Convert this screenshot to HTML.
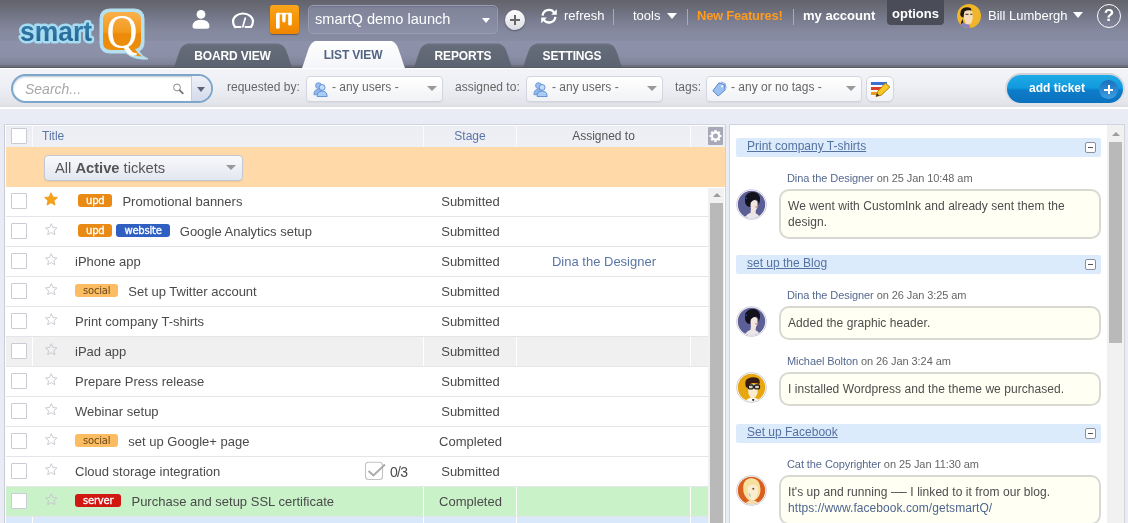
<!DOCTYPE html>
<html lang="en">
<head>
<meta charset="utf-8">
<title>smartQ</title>
<style>
*{box-sizing:border-box;margin:0;padding:0}
html,body{width:1128px;height:523px;overflow:hidden}
body{font-family:"Liberation Sans",sans-serif;font-size:13px;color:#444;background:#e9ecf4;position:relative}
.abs{position:absolute}
#hdr,#fbar,#list,#right,.sel,.lbl{will-change:transform}
/* header */
#hdr{position:absolute;left:0;top:0;width:1128px;height:68px;background:linear-gradient(#62636c 0,#6c6e7b 10px,#797c8f 20px,#84889e 30px,#898da4 41px,#8d92aa 41px,#8b90a8 55px,#83879d 62px,#7b7e91 65px,#6e7080 65.500px,#6c6e7d 67px,#555b62 67px,#555b62 68px)}
#hdr .t{position:absolute;color:#fff;font-size:13px;line-height:16px;white-space:nowrap}
.sep{position:absolute;top:8.500px;width:1px;height:16px;background:#a9abb8}
.tab{position:absolute;top:42px;height:25px;color:#fff;font-weight:bold;font-size:12px;line-height:29px;text-align:center;letter-spacing:-0.150px}
.tab svg{position:absolute;left:0;top:0}
.tab span{position:relative}
/* filter bar */
#fbar{position:absolute;left:0;top:68px;width:1128px;height:41px;background:linear-gradient(#fff 0,#fff 1px,#f3f4f8 1px,#eeeff4 19px,#e4e5eb 35px,#dcdde3 39px,#fff 39px,#fff 40.500px,#eef0f6 41px)}
.lbl{position:absolute;top:79px;font-size:12px;color:#666;line-height:16px;white-space:nowrap}
.sel{position:absolute;top:75.500px;height:25.500px;margin-left:-0.500px;border:1px solid #d3d6de;border-radius:4px;background:linear-gradient(#fff,#f1f2f6);font-size:12px;color:#666;line-height:21px;white-space:nowrap;box-shadow:0 1px 1px rgba(0,0,0,.06)}
.sel .arr{position:absolute;right:5.500px;top:9px;width:0;height:0;border-left:5px solid transparent;border-right:5px solid transparent;border-top:5px solid #999}
/* list */
#list{position:absolute;left:5px;top:124px;width:721px;height:399px;background:#fff;border-left:1px solid #fff;border-top:1px solid #d0d4de;border-right:1px solid #cfd2dc;overflow:hidden;box-shadow:-1px 0 0 #c9ccd6}
#lhead{position:absolute;left:0;top:0;width:719px;height:22px;background:linear-gradient(#fff 0,#fff 1px,#eceef3 1px,#eff0f5 22px);font-size:12px}
#lhead div{position:absolute;top:0;height:22px;line-height:23px}
#lhead .hs{position:absolute;top:0;width:1px;height:22px;background:#fbfbfd}
#grp{position:absolute;left:0;top:22px;width:719px;height:40px;background:#ffd9a8}
.row{position:absolute;left:0;width:702px;height:30px;border-bottom:1px solid #e4e5e9;font-size:13px;line-height:29px;color:#4a4a4a;white-space:nowrap;background:#fff}
.row.hov{background:#f0f0f1}
.row.grn{background:#c9f2c9}
.row .vs{position:absolute;top:0;width:1px;height:29px;background:#fff}
.row .cb{position:absolute;left:5px;top:6px;width:16px;height:16px;border:1px solid #c9ccd3;background:#fff;border-radius:1px}
.row .star{position:absolute;left:38px;top:5px}
.row .ti{position:absolute;left:69px;top:0}
.row .ti .tag.upd:first-child{margin-left:3px}
.row .st{position:absolute;left:418px;width:93px;text-align:center;top:0}
.row .as{position:absolute;left:511px;width:174px;text-align:center;top:0;color:#5a76a6}
.tag{display:inline-block;vertical-align:middle;height:13.500px;line-height:13.500px;font-size:11px;padding:0 8px;border-radius:3px;color:#fff;margin-right:4px;position:relative;top:-1.600px;-webkit-text-stroke-width:.300px;font-family:"DejaVu Sans","Liberation Sans",sans-serif;font-size:10px;letter-spacing:-0.2px}
.tag.upd{background:#e98a14}
.tag.web{background:#2f5fc0}
.tag.soc{background:#fbbc62;color:#6b4a1a;-webkit-text-stroke-width:0}
.tag.srv{background:#d01712}
/* right */
#right{position:absolute;left:729px;top:124px;width:396px;height:399px;background:#fff;border-left:1px solid #d0d4de;border-top:1px solid #d0d4de;border-right:1px solid #d0d4de;overflow:hidden}
.th{position:absolute;left:6px;width:365px;height:19px;background:#dcebfb;font-size:12px;line-height:15px;color:#5a76a6;border-radius:2px}
.th a{position:absolute;left:11px;top:1px;color:#5672a2;text-decoration:underline}
.th i{position:absolute;right:5px;top:4px;width:11px;height:11px;border:1px solid #8a8f9b;border-radius:2px;background:#fff}
.th i:after{content:"";position:absolute;left:2px;top:4px;width:5px;height:1px;background:#555}
.who{position:absolute;left:57px;font-size:11px;color:#666;line-height:13px;white-space:nowrap;letter-spacing:-0.080px}
.who b{font-weight:normal;color:#55698f}
.bub{position:absolute;left:49px;width:322px;border:2px solid #d8d9d0;border-radius:10px;background:#fffff3;font-size:12px;line-height:16px;color:#4d4d4d;padding:7px 7px 7px 7px;white-space:nowrap;letter-spacing:.060px}
.bub span{color:#4f6690}
.av{position:absolute;left:6px;width:31px;height:31px}
</style>
</head>
<body>
<div id="hdr">
<!-- logo -->
<svg class="abs" style="left:10px;top:0" width="150" height="67" viewBox="0 0 150 67">
 <defs>
  <linearGradient id="gq" x1="0" y1="0" x2="0" y2="1"><stop offset="0" stop-color="#f9b04a"/><stop offset="0.45" stop-color="#f29a1e"/><stop offset="0.5" stop-color="#ec8a08"/><stop offset="1" stop-color="#ef9010"/></linearGradient>
  <linearGradient id="gs" x1="0" y1="0" x2="0" y2="1"><stop offset="0" stop-color="#3b84b4"/><stop offset="1" stop-color="#1f5f8c"/></linearGradient>
 </defs>
 <text x="10" y="41" font-family="Liberation Sans,sans-serif" font-weight="bold" font-size="27" textLength="72" lengthAdjust="spacingAndGlyphs" stroke="#a6dcf1" stroke-width="5" stroke-linejoin="round" fill="#a6dcf1">smart</text>
 <text x="10" y="41" font-family="Liberation Sans,sans-serif" font-weight="bold" font-size="27" textLength="72" lengthAdjust="spacingAndGlyphs" fill="url(#gs)">smart</text>
 <path d="M100 9 H124 Q134 9 134 19 V42 Q134 49 129 51 Q131 56 138 59 Q124 60 116 53 H100 Q90 53 90 43 V19 Q90 9 100 9Z" fill="#b5e0ef" stroke="#b5e0ef" stroke-width="1"/>
 <path d="M101 12 H123 Q131 12 131 20 V41 Q131 48 125 49 Q127 53 132 56.500 Q123 56 118 50 H101 Q93 50 93 42 V20 Q93 12 101 12Z" fill="url(#gq)"/>
 <text x="96.500" y="48" font-family="Liberation Serif,serif" font-size="49" fill="#fff" textLength="31" lengthAdjust="spacingAndGlyphs">Q</text>
</svg>
<!-- icons -->
<svg class="abs" style="left:189px;top:8px" width="24" height="22" viewBox="0 0 24 22"><circle cx="12" cy="6.400" r="4.400" fill="#fff"/><path d="M3.600 18.500 Q3.600 11.700 12 11.700 Q20.400 11.700 20.400 18.500 Q20.400 20.700 17.500 20.700 H6.500 Q3.600 20.700 3.600 18.500Z" fill="#fff"/></svg>
<svg class="abs" style="left:230px;top:10px" width="26" height="20" viewBox="0 0 26 20"><path d="M5 17 A10 10 0 0 1 3 11.500 A10 8 0 0 1 23 11.500 A10 10 0 0 1 21 17 H15.500 M5 17 H10.500" fill="none" stroke="#fff" stroke-width="2.200" stroke-linejoin="round" stroke-linecap="round"/><path d="M12.800 16.800 L15.300 8" stroke="#fff" stroke-width="1.700" stroke-linecap="round"/></svg>
<div class="abs" style="left:270px;top:5px;width:29px;height:29px;border-radius:3px;background:linear-gradient(#fba51c,#f59200 60%,#ee8500);box-shadow:0 1px 1px rgba(0,0,0,.35)">
 <svg width="29" height="29" viewBox="0 0 29 29"><rect x="6" y="7.800" width="3.700" height="16" rx="1.600" fill="#fff"/><rect x="12.200" y="7.800" width="3.400" height="9.600" rx="1.600" fill="#fff"/><rect x="18.200" y="7.800" width="3.700" height="12.800" rx="1.600" fill="#fff"/><rect x="7" y="7.800" width="14" height="1.700" fill="#fff" opacity=".85"/></svg>
</div>
<div class="abs" style="left:308px;top:5px;width:190px;height:29px;border:1px solid #999db0;border-radius:5px;background:linear-gradient(#7f8398,#8c90a8);box-shadow:inset 0 1px 1px rgba(60,60,80,.25)"></div>
<div class="t" style="left:315px;top:10px;font-size:14.600px;line-height:18px">smartQ demo launch</div>
<i class="abs" style="left:482px;top:18px;border-left:4.500px solid transparent;border-right:4.500px solid transparent;border-top:5px solid #fff"></i>
<div class="abs" style="left:505px;top:10px;width:20px;height:20px;border-radius:50%;background:linear-gradient(#fff,#dcdde3);box-shadow:0 1px 2px rgba(0,0,0,.4)"><i class="abs" style="left:5px;top:9.200px;width:10px;height:1.600px;background:#666"></i><i class="abs" style="left:9.200px;top:5px;width:1.600px;height:10px;background:#666"></i></div>
<svg class="abs" style="left:539px;top:6px" width="20" height="20" viewBox="0 0 20 20"><path d="M3.600 9.600 A6.400 6.400 0 0 1 15.300 6.800" fill="none" stroke="#fff" stroke-width="2.300"/><path d="M16.400 10.800 A6.400 6.400 0 0 1 4.700 13.600" fill="none" stroke="#fff" stroke-width="2.300"/><path d="M12.200 8.800 L17.800 8.800 L17.800 3.200 Z" fill="#fff"/><path d="M7.800 11.600 L2.200 11.600 L2.200 17.200 Z" fill="#fff"/></svg>
<div class="t" style="left:564px;top:8px">refresh</div>
<i class="sep" style="left:613px"></i>
<div class="t" style="left:633px;top:8px">tools</div>
<i class="abs" style="left:667px;top:13px;border-left:5.500px solid transparent;border-right:5.500px solid transparent;border-top:6px solid #fff"></i>
<i class="sep" style="left:687px"></i>
<div class="t" style="left:697px;top:8px;font-weight:bold;color:#ff9b1e;letter-spacing:-0.250px">New Features!</div>
<i class="sep" style="left:793px"></i>
<div class="t" style="left:803px;top:8px;font-weight:bold">my account</div>
<div class="abs" style="left:887px;top:0;width:57px;height:25px;background:#4a4c58;border-radius:0 0 4px 4px"></div>
<div class="t" style="left:892px;top:6px;font-weight:bold">options</div>
<!-- avatar bill -->
<svg class="abs" style="left:957px;top:3.500px" width="24" height="24" viewBox="0 0 24 24"><defs><clipPath id="cb"><circle cx="12" cy="12" r="12"/></clipPath></defs><g clip-path="url(#cb)"><rect width="24" height="24" fill="#f0b62a"/><path d="M6 8 Q7 5.500 11 5.500 Q15 5.500 15.500 9 L15.800 14 Q15.500 18 13 20.500 L9 20 Q6.500 15 6 8Z" fill="#f6dcb8"/><path d="M3.200 10.500 Q3 3.500 10 3.300 Q14.500 3.300 14.500 6.500 Q10 5.800 7.500 7.500 Q6.800 10 6.500 13.500 Q4 13.500 3.200 10.500Z" fill="#1d1512"/><path d="M5.500 15 Q4 18 3.500 21 L6.500 19Z" fill="#2a1d16"/><path d="M2 24 Q3 19.500 6.500 18.800 Q9 21 12.500 20.500 L13 24Z" fill="#8b82c4"/><path d="M8.500 10.300 h3 M13.300 10.300 h2" stroke="#5a4a32" stroke-width="1.200"/></g></svg>
<div class="t" style="left:988px;top:8px">Bill Lumbergh</div>
<i class="abs" style="left:1073px;top:12px;border-left:5.500px solid transparent;border-right:5.500px solid transparent;border-top:6px solid #fff"></i>
<div class="abs" style="left:1097px;top:3.500px;width:24px;height:24px;border-radius:50%;border:1.700px solid #fff;color:#fff;font-weight:bold;font-size:17px;line-height:21px;text-align:center">?</div>
<!-- tabs -->
<svg class="abs" width="0" height="0"><defs><linearGradient id="gtd" x1="0" y1="0" x2="0" y2="1"><stop offset="0" stop-color="#6a7280"/><stop offset="0.15" stop-color="#646c7a"/><stop offset="1" stop-color="#5c6370"/></linearGradient><linearGradient id="gt" x1="0" y1="0" x2="0" y2="1"><stop offset="0" stop-color="#ffffff"/><stop offset="1" stop-color="#f4f5f9"/></linearGradient></defs></svg>
<div class="tab" style="left:173.5px;width:118px"><svg width="118" height="25" viewBox="0 0 118 25"><path d="M0 25 C2 20 3 16 4.5 12 C6.5 6 8 3.0 13.5 1.5 H104.5 C110 3.0 111.5 6 113.5 12 C115 16 116 20 118 25 Z" fill="url(#gtd)"/></svg><span>BOARD VIEW</span></div>
<div class="tab" style="left:414px;width:98px"><svg width="98" height="25" viewBox="0 0 98 25"><path d="M0 25 C2 20 3 16 4.5 12 C6.5 6 8 3.0 13.5 1.5 H84.5 C90 3.0 91.5 6 93.5 12 C95 16 96 20 98 25 Z" fill="url(#gtd)"/></svg><span>REPORTS</span></div>
<div class="tab" style="left:522.5px;width:99px"><svg width="99" height="25" viewBox="0 0 99 25"><path d="M0 25 C2 20 3 16 4.5 12 C6.5 6 8 3.0 13.5 1.5 H85.5 C91 3.0 92.5 6 94.5 12 C96 16 97 20 99 25 Z" fill="url(#gtd)"/></svg><span>SETTINGS</span></div>
<div class="tab" style="left:301.500px;width:103px;top:40px;height:28px;color:#536482;line-height:30px"><svg width="103" height="28" viewBox="0 0 103 28"><path d="M0 28 C2 23 3 19 4.5 15 C6.5 9 8 2.5 13.5 1 H89.5 C95 2.5 96.5 9 98.5 15 C100 19 101 23 103 28 Z" fill="url(#gt)"/></svg><span>LIST VIEW</span></div>
</div>
<div id="fbar"></div>
<div class="abs" style="left:11px;top:74px;width:202px;height:29px;border:2px solid #7da6cb;border-radius:15px;background:#fff;overflow:hidden;box-shadow:inset 0 1px 2px rgba(60,90,130,.35)">
 <div class="abs" style="left:12px;top:5px;font-size:14px;line-height:17px;font-style:italic;color:#a8a8a8">Search...</div>
 <svg class="abs" style="left:158px;top:5px" width="16" height="16" viewBox="0 0 16 16"><circle cx="6" cy="6.500" r="3.400" fill="#fff" stroke="#8a8a8a" stroke-width="1"/><path d="M8.800 9.300 L11.800 12.300" stroke="#777" stroke-width="1.800" stroke-linecap="round"/></svg>
 <div class="abs" style="left:178px;top:0;width:22px;height:25px;background:linear-gradient(#eef1f8,#d3daea);border-left:1px solid #c5cddd"></div>
 <i class="abs" style="left:183.500px;top:11px;border-left:4.500px solid transparent;border-right:4.500px solid transparent;border-top:5px solid #59657f"></i>
</div>
<div class="lbl" style="left:227px">requested by:</div>
<div class="sel" style="left:306px;width:137px"><svg class="abs" style="left:5.500px;top:4px" width="15.500" height="16.500" viewBox="0 0 17 18"><circle cx="6" cy="5" r="3.200" fill="#9cc0ee" stroke="#6a96d8" stroke-width="1"/><path d="M1 15 Q1 9 6 9 Q11 9 11 15Z" fill="#8fb7ea" stroke="#6a96d8" stroke-width="1"/><circle cx="10" cy="7" r="3.200" fill="#c4ddf8" stroke="#5b8ad2" stroke-width="1"/><path d="M4.500 17 Q4.500 11 10 11 Q15.500 11 15.500 17Z" fill="#a9ccf5" stroke="#5b8ad2" stroke-width="1"/></svg><span class="abs" style="left:25px;top:0">- any users -</span><i class="arr"></i></div>
<div class="lbl" style="left:455px">assigned to:</div>
<div class="sel" style="left:526px;width:137px"><svg class="abs" style="left:5.500px;top:4px" width="15.500" height="16.500" viewBox="0 0 17 18"><circle cx="6" cy="5" r="3.200" fill="#9cc0ee" stroke="#6a96d8" stroke-width="1"/><path d="M1 15 Q1 9 6 9 Q11 9 11 15Z" fill="#8fb7ea" stroke="#6a96d8" stroke-width="1"/><circle cx="10" cy="7" r="3.200" fill="#c4ddf8" stroke="#5b8ad2" stroke-width="1"/><path d="M4.500 17 Q4.500 11 10 11 Q15.500 11 15.500 17Z" fill="#a9ccf5" stroke="#5b8ad2" stroke-width="1"/></svg><span class="abs" style="left:25px;top:0">- any users -</span><i class="arr"></i></div>
<div class="lbl" style="left:675px">tags:</div>
<div class="sel" style="left:706px;width:156px"><svg class="abs" style="left:5px;top:4px" width="15" height="16" viewBox="0 0 17 18"><path d="M8 2 L14 4 L15 10 L7 17 L1 11 Z" fill="#9cc0f0" stroke="#4a7bc8" stroke-width="1" stroke-linejoin="round"/><path d="M10 1 L15 3 L16 8" fill="none" stroke="#6f9be0" stroke-width="1"/><circle cx="11.500" cy="6" r="1.200" fill="#fff"/></svg><span class="abs" style="left:24px;top:0">- any or no tags -</span><i class="arr"></i></div>
<div class="sel" style="left:866px;width:28px;border-radius:6px"><svg class="abs" style="left:3px;top:3px" width="21" height="18" viewBox="0 0 21 18"><rect x="1" y="2" width="16" height="3" fill="#3b6fd0"/><rect x="1" y="7" width="11" height="3" fill="#d8402c"/><rect x="1" y="12" width="8" height="3" fill="#f09a1c"/><path d="M6 16.500 L7.500 11.500 L15.500 3 L19.800 7 L11.500 15 Z" fill="#f8c824" stroke="#b57d00" stroke-width="1" stroke-linejoin="round"/><path d="M6 16.500 L7 13.200 L9.500 15.600Z" fill="#333"/></svg></div>
<div class="abs" style="left:1005px;top:72.500px;width:120px;height:32.500px;border-radius:17px;background:linear-gradient(#cfd1d8,#e2e4ea)"></div>
<div class="abs" style="left:1007px;top:74.500px;width:116px;height:28.500px;border-radius:15px;background:linear-gradient(#1eaae6 0,#119ade 45%,#0d7cc8 55%,#0c72c0 100%);color:#fff;font-weight:bold;font-size:12px;line-height:27px"><span class="abs" style="left:22px;top:0">add ticket</span>
 <div class="abs" style="left:92px;top:5px;width:19px;height:19px;border-radius:50%;background:linear-gradient(#1a6fbe,#3f9fe0)"><i class="abs" style="left:5px;top:9px;width:9px;height:2px;background:#fff"></i><i class="abs" style="left:8.500px;top:5px;width:2px;height:9px;background:#fff"></i></div>
</div>
<div id="list">
<div id="lhead">
 <i class="abs" style="left:5px;top:3px;width:16px;height:16px;border:1px solid #c6cad3;background:#fff;border-radius:1px"></i>
 <i class="hs" style="left:26px"></i><i class="hs" style="left:417px"></i><i class="hs" style="left:510px"></i><i class="hs" style="left:684px"></i>
 <div style="left:36px;color:#5a76a6">Title</div>
 <div style="left:418px;width:92px;text-align:center;color:#5a76a6">Stage</div>
 <div style="left:511px;width:173px;text-align:center;color:#555">Assigned to</div>
 <div style="left:702px;top:2px;width:15px;height:18px;background:#a7a9b6;border-radius:1px"><svg width="15" height="18" viewBox="0 0 15 18"><g transform="translate(7.500 9)"><circle r="3.600" fill="none" stroke="#fff" stroke-width="2.200"/><g stroke="#fff" stroke-width="2.200"><path d="M0 -6 V-3.500"/><path d="M0 6 V3.500"/><path d="M-6 0 H-3.500"/><path d="M6 0 H3.500"/><path d="M-4.200 -4.200 L-2.600 -2.600"/><path d="M4.200 4.200 L2.600 2.600"/><path d="M-4.200 4.200 L-2.600 2.600"/><path d="M4.200 -4.200 L2.600 -2.600"/></g></g></svg></div>
</div>
<div id="grp">
 <div class="abs" style="left:37.500px;top:7.500px;width:199px;height:26px;border:1px solid #c3c8d3;border-radius:4px;background:linear-gradient(#f8f9fc,#e3e7ef);box-shadow:0 1px 1px rgba(0,0,0,.08)"></div>
 <div class="abs" style="left:49px;top:13px;font-size:14.700px;line-height:17px;color:#555;white-space:nowrap">All <b>Active</b> tickets</div>
 <i class="abs" style="left:220px;top:18px;border-left:5px solid transparent;border-right:5px solid transparent;border-top:5px solid #999"></i>
</div>
<div class="row" style="top:61.7px"><i class="cb"></i><svg class="star" width="14" height="14" viewBox="0 0 14 14"><path d="M7 0.800 L8.900 5 L13.400 5.500 L10 8.600 L11 13.100 L7 10.800 L3 13.100 L4 8.600 L0.600 5.500 L5.100 5 Z" fill="#f5a21b" stroke="#ee9410" stroke-width="0.800" stroke-linejoin="round"/></svg><div class="ti"><span class="tag upd">upd</span><span style="margin-left:6px">Promotional banners</span></div><div class="st">Submitted</div></div>
<div class="row" style="top:91.7px"><i class="cb"></i><svg class="star" style="left:39px;top:6px" width="12.500" height="12.500" viewBox="0 0 14 14"><path d="M7 0.800 L8.900 5 L13.400 5.500 L10 8.600 L11 13.100 L7 10.800 L3 13.100 L4 8.600 L0.600 5.500 L5.100 5 Z" fill="none" stroke="#c3c6cd" stroke-width="1" stroke-linejoin="round"/></svg><div class="ti"><span class="tag upd">upd</span><span class="tag web">website</span><span style="margin-left:6px">Google Analytics setup</span></div><div class="st">Submitted</div></div>
<div class="row" style="top:121.7px"><i class="cb"></i><svg class="star" style="left:39px;top:6px" width="12.500" height="12.500" viewBox="0 0 14 14"><path d="M7 0.800 L8.900 5 L13.400 5.500 L10 8.600 L11 13.100 L7 10.800 L3 13.100 L4 8.600 L0.600 5.500 L5.100 5 Z" fill="none" stroke="#c3c6cd" stroke-width="1" stroke-linejoin="round"/></svg><div class="ti">iPhone app</div><div class="st">Submitted</div><div class="as">Dina the Designer</div></div>
<div class="row" style="top:151.7px"><i class="cb"></i><svg class="star" style="left:39px;top:6px" width="12.500" height="12.500" viewBox="0 0 14 14"><path d="M7 0.800 L8.900 5 L13.400 5.500 L10 8.600 L11 13.100 L7 10.800 L3 13.100 L4 8.600 L0.600 5.500 L5.100 5 Z" fill="none" stroke="#c3c6cd" stroke-width="1" stroke-linejoin="round"/></svg><div class="ti"><span class="tag soc">social</span><span style="margin-left:6px">Set up Twitter account</span></div><div class="st">Submitted</div></div>
<div class="row" style="top:181.7px"><i class="cb"></i><svg class="star" style="left:39px;top:6px" width="12.500" height="12.500" viewBox="0 0 14 14"><path d="M7 0.800 L8.900 5 L13.400 5.500 L10 8.600 L11 13.100 L7 10.800 L3 13.100 L4 8.600 L0.600 5.500 L5.100 5 Z" fill="none" stroke="#c3c6cd" stroke-width="1" stroke-linejoin="round"/></svg><div class="ti">Print company T-shirts</div><div class="st">Submitted</div></div>
<div class="row hov" style="top:211.7px"><i class="cb"></i><svg class="star" style="left:39px;top:6px" width="12.500" height="12.500" viewBox="0 0 14 14"><path d="M7 0.800 L8.900 5 L13.400 5.500 L10 8.600 L11 13.100 L7 10.800 L3 13.100 L4 8.600 L0.600 5.500 L5.100 5 Z" fill="none" stroke="#c3c6cd" stroke-width="1" stroke-linejoin="round"/></svg><div class="ti">iPad app</div><i class="vs" style="left:26px"></i><i class="vs" style="left:417px"></i><i class="vs" style="left:510px"></i><i class="vs" style="left:684px"></i><div class="st">Submitted</div></div>
<div class="row" style="top:241.7px"><i class="cb"></i><svg class="star" style="left:39px;top:6px" width="12.500" height="12.500" viewBox="0 0 14 14"><path d="M7 0.800 L8.900 5 L13.400 5.500 L10 8.600 L11 13.100 L7 10.800 L3 13.100 L4 8.600 L0.600 5.500 L5.100 5 Z" fill="none" stroke="#c3c6cd" stroke-width="1" stroke-linejoin="round"/></svg><div class="ti">Prepare Press release</div><div class="st">Submitted</div></div>
<div class="row" style="top:271.7px"><i class="cb"></i><svg class="star" style="left:39px;top:6px" width="12.500" height="12.500" viewBox="0 0 14 14"><path d="M7 0.800 L8.900 5 L13.400 5.500 L10 8.600 L11 13.100 L7 10.800 L3 13.100 L4 8.600 L0.600 5.500 L5.100 5 Z" fill="none" stroke="#c3c6cd" stroke-width="1" stroke-linejoin="round"/></svg><div class="ti">Webinar setup</div><div class="st">Submitted</div></div>
<div class="row" style="top:301.7px"><i class="cb"></i><svg class="star" style="left:39px;top:6px" width="12.500" height="12.500" viewBox="0 0 14 14"><path d="M7 0.800 L8.900 5 L13.400 5.500 L10 8.600 L11 13.100 L7 10.800 L3 13.100 L4 8.600 L0.600 5.500 L5.100 5 Z" fill="none" stroke="#c3c6cd" stroke-width="1" stroke-linejoin="round"/></svg><div class="ti"><span class="tag soc">social</span><span style="margin-left:6px">set up Google+ page</span></div><div class="st">Completed</div></div>
<div class="row" style="top:331.7px"><i class="cb"></i><svg class="star" style="left:39px;top:6px" width="12.500" height="12.500" viewBox="0 0 14 14"><path d="M7 0.800 L8.900 5 L13.400 5.500 L10 8.600 L11 13.100 L7 10.800 L3 13.100 L4 8.600 L0.600 5.500 L5.100 5 Z" fill="none" stroke="#c3c6cd" stroke-width="1" stroke-linejoin="round"/></svg><div class="ti">Cloud storage integration</div><svg class="abs" style="left:358px;top:2.500px" width="24" height="22" viewBox="0 0 24 22"><rect x="1.500" y="3.200" width="17" height="17.300" rx="3" fill="#fff" stroke="#c2c2c2" stroke-width="1.100"/><path d="M4.600 12 L9.400 16.500 L21 5.500" fill="none" stroke="#ababab" stroke-width="2" stroke-linejoin="miter"/></svg><div class="abs" style="left:384px;top:1px;font-size:14px;letter-spacing:-0.700px">0/3</div><div class="st">Submitted</div></div>
<div class="row grn" style="top:361.7px"><i class="cb"></i><svg class="star" style="left:39px;top:6px" width="12.500" height="12.500" viewBox="0 0 14 14"><path d="M7 0.800 L8.900 5 L13.400 5.500 L10 8.600 L11 13.100 L7 10.800 L3 13.100 L4 8.600 L0.600 5.500 L5.100 5 Z" fill="none" stroke="#c3c6cd" stroke-width="1" stroke-linejoin="round"/></svg><div class="ti"><span class="tag srv">server</span><span style="margin-left:6px">Purchase and setup SSL certificate</span></div><i class="vs" style="left:417px"></i><i class="vs" style="left:510px"></i><i class="vs" style="left:684px"></i><div class="st">Completed</div></div>
<div class="row" style="top:391.7px;background:#d9e8fb"><i class="vs" style="left:26px"></i><i class="vs" style="left:417px"></i><i class="vs" style="left:510px"></i><i class="vs" style="left:684px"></i></div>
<div class="abs" style="left:702px;top:63px;width:16px;height:340px;background:#f1f1f1">
 <i class="abs" style="left:4.500px;top:5px;border-left:4px solid transparent;border-right:4px solid transparent;border-bottom:4.500px solid #9d9d9d"></i>
 <div class="abs" style="left:1.500px;top:15px;width:13px;height:330px;background:#b9b9b9"></div>
</div>
</div>
</div>
<div id="right">
<div class="th" style="top:13px"><a>Print company T-shirts</a><i></i></div>
<div class="who" style="top:47px"><b>Dina the Designer</b> on 25 Jan 10:48 am</div>
<svg class="av" style="top:64px" viewBox="0 0 31 31"><defs><clipPath id="c64"><circle cx="15.500" cy="15.500" r="13.700"/></clipPath></defs><circle cx="15.500" cy="15.500" r="15" fill="#fff" stroke="#cfcfdc" stroke-width="1"/><g clip-path="url(#c64)"><rect width="31" height="31" fill="#5c5e96"/><path d="M8 31 Q10 24.500 16 23.500 Q23 24 25 31Z" fill="#ece6ea"/><path d="M15 18 L20 20 L19.500 25 L14.500 25Z" fill="#efe5dc"/><path d="M14.300 12 Q18 9.500 21.300 12.500 L21.500 18 Q20.500 21.500 18 22 Q15 21 14.300 17Z" fill="#f1e7de"/><path d="M9.200 14 Q7.500 4.500 15.500 3 Q22.500 2.200 24 8.500 Q24.500 12.500 22.700 16 Q22.500 11.500 20 10.500 Q16.500 11 14.800 13.500 Q14.200 15.500 14.500 18 Q10.500 18 9.200 14Z" fill="#13111b"/><circle cx="10.300" cy="9.300" r="0.700" fill="#2a5bd0"/><path d="M19.300 17.800 q1 .5 1.900 0" stroke="#b5524a" stroke-width="0.900" fill="none"/></g></svg>
<div class="bub" style="top:64px">We went with CustomInk and already sent them the<br>design.</div>
<div class="th" style="top:130px"><a>set up the Blog</a><i></i></div>
<div class="who" style="top:164px"><b>Dina the Designer</b> on 26 Jan 3:25 am</div>
<svg class="av" style="top:181px" viewBox="0 0 31 31"><defs><clipPath id="c181"><circle cx="15.500" cy="15.500" r="13.700"/></clipPath></defs><circle cx="15.500" cy="15.500" r="15" fill="#fff" stroke="#cfcfdc" stroke-width="1"/><g clip-path="url(#c181)"><rect width="31" height="31" fill="#5c5e96"/><path d="M8 31 Q10 24.500 16 23.500 Q23 24 25 31Z" fill="#ece6ea"/><path d="M15 18 L20 20 L19.500 25 L14.500 25Z" fill="#efe5dc"/><path d="M14.300 12 Q18 9.500 21.300 12.500 L21.500 18 Q20.500 21.500 18 22 Q15 21 14.300 17Z" fill="#f1e7de"/><path d="M9.200 14 Q7.500 4.500 15.500 3 Q22.500 2.200 24 8.500 Q24.500 12.500 22.700 16 Q22.500 11.500 20 10.500 Q16.500 11 14.800 13.500 Q14.200 15.500 14.500 18 Q10.500 18 9.200 14Z" fill="#13111b"/><circle cx="10.300" cy="9.300" r="0.700" fill="#2a5bd0"/><path d="M19.300 17.800 q1 .5 1.900 0" stroke="#b5524a" stroke-width="0.900" fill="none"/></g></svg>
<div class="bub" style="top:181px">Added the graphic header.</div>
<div class="who" style="top:230px"><b>Michael Bolton</b> on 26 Jan 3:24 am</div>
<svg class="av" style="top:247px" viewBox="0 0 31 31"><defs><clipPath id="c247"><circle cx="15.500" cy="15.500" r="13.700"/></clipPath></defs><circle cx="15.500" cy="15.500" r="15" fill="#fff" stroke="#cfcfdc" stroke-width="1"/><g clip-path="url(#c247)"><rect width="31" height="31" fill="#e6a711"/><path d="M9 31 Q10 26 16.500 25.500 Q23 26 24 31Z" fill="#fbfbfb"/><path d="M16 27 l1.200 4 l1.200 -4z" fill="#333"/><path d="M11.800 13 Q16 10.500 22 13 L21.500 21 Q20 26 16.800 26.500 Q13.500 26 12.300 21Z" fill="#fbeccc"/><path d="M9.500 13.500 Q8.500 8 12 6.500 Q17 4.500 21.500 6 Q24.500 7.500 23.500 12 Q20 10.500 16.500 11 Q13.500 11.500 12.500 14 L11.500 16 Q9.800 15.500 9.500 13.500Z" fill="#3a1d10"/><rect x="12.300" y="13" width="5" height="3.800" rx="1.200" fill="#d8d2c4" stroke="#1e1a1a" stroke-width="1.300"/><rect x="18.500" y="13" width="5" height="3.800" rx="1.200" fill="#d8d2c4" stroke="#1e1a1a" stroke-width="1.300"/></g></svg>
<div class="bub" style="top:247px">I installed Wordpress and the theme we purchased.</div>
<div class="th" style="top:299px"><a>Set up Facebook</a><i></i></div>
<div class="who" style="top:333px"><b>Cat the Copyrighter</b> on 25 Jan 11:30 am</div>
<svg class="av" style="top:350px" viewBox="0 0 31 31"><defs><clipPath id="c350"><circle cx="15.500" cy="15.500" r="13.700"/></clipPath></defs><circle cx="15.500" cy="15.500" r="15" fill="#fff" stroke="#cfcfdc" stroke-width="1"/><g clip-path="url(#c350)"><rect width="31" height="31" fill="#d85f1e"/><path d="M8.500 31 Q10 25.500 16 25 Q22 25.500 24 31Z" fill="#f3dcae"/><path d="M7.500 17 Q5.500 4 15.500 3 Q24 3.500 24.500 14 Q24.500 20 21.500 23 Q19 26 16 26 Q12.500 26 10.500 23 Q8 20 7.500 17Z" fill="#f6df9f"/><path d="M11.500 12 Q16 8 21.500 11 Q22.500 16 21 20.500 Q19 25 16.500 25 Q13.500 24.500 12.500 20.500Z" fill="#fbeed0"/><circle cx="17.300" cy="13.800" r="1" fill="#6a4a20"/><path d="M13.500 18.500 q.3 2 .9 3" stroke="#7fb6c8" stroke-width="1" fill="none"/></g></svg>
<div class="bub" style="top:350px">It's up and running <u style="text-decoration:none;letter-spacing:-2.700px">—</u>– I linked to it from our blog.<br><span>https://www.facebook.com/getsmartQ/</span></div>
<div class="abs" style="left:377px;top:0;width:17px;height:399px;background:#f1f1f1">
 <i class="abs" style="left:4.500px;top:7px;border-left:4px solid transparent;border-right:4px solid transparent;border-bottom:4.500px solid #9d9d9d"></i>
 <div class="abs" style="left:2px;top:16.500px;width:13px;height:201.500px;background:#b9b9b9"></div>
</div>
</div>
</div>
</body>
</html>
